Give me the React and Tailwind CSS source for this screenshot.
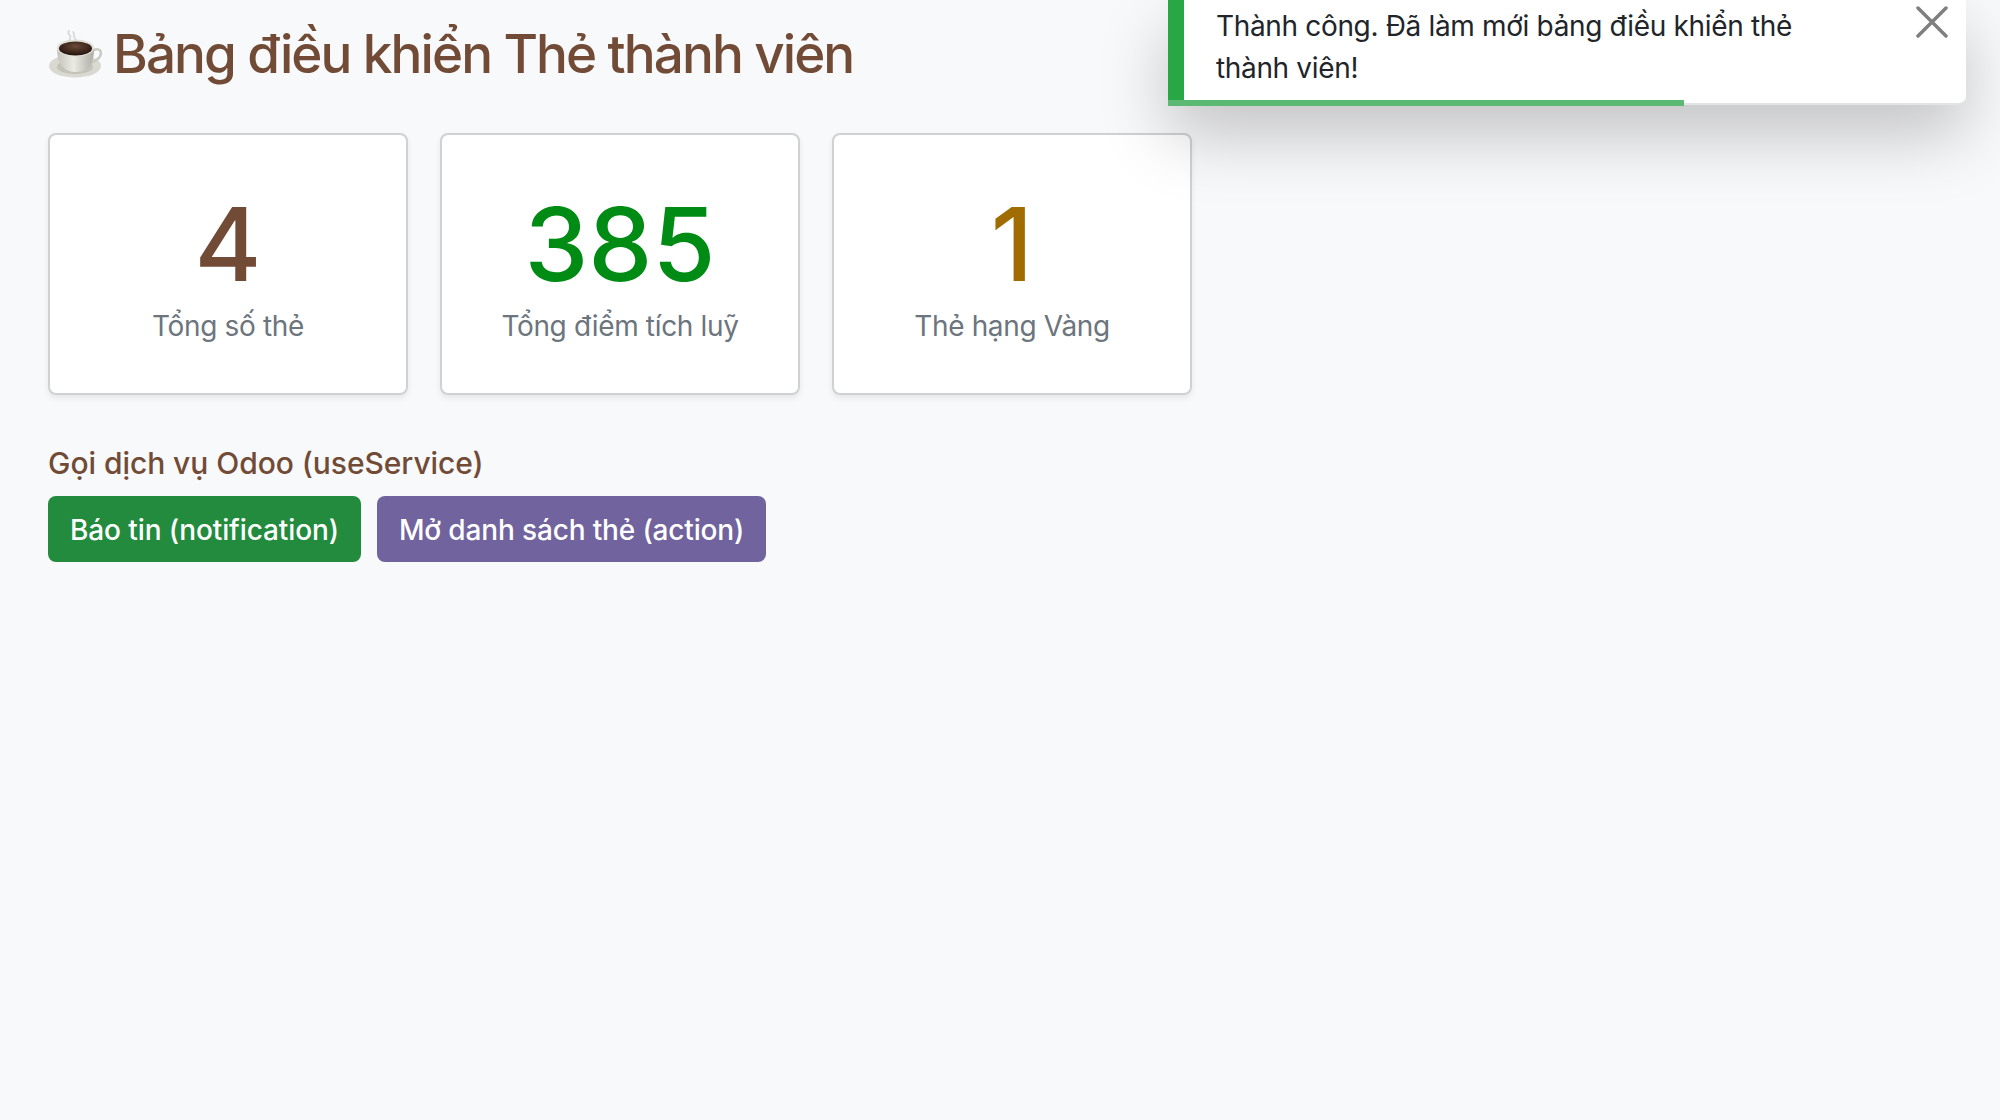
const cards = [
  { value: "4", label: "Tổng số thẻ", color: "text-[#714b35]" },
  { value: "385", label: "Tổng điểm tích luỹ", color: "text-[#008c14]" },
  { value: "1", label: "Thẻ hạng Vàng", color: "text-[#a06c00]" },
]

function CoffeeIcon() {
  return (
    <svg width="54" height="50" viewBox="0 0 54 50" className="shrink-0">
      <defs>
        <linearGradient id="cup" x1="0" x2="1" y1="0" y2="0">
          <stop offset="0" stopColor="#c4c3ba" />
          <stop offset="0.45" stopColor="#ebeae3" />
          <stop offset="1" stopColor="#aeada4" />
        </linearGradient>
        <radialGradient id="coffee" cx="0.5" cy="0.35" r="0.7">
          <stop offset="0" stopColor="#6a4a38" />
          <stop offset="1" stopColor="#1e0f09" />
        </radialGradient>
      </defs>
      <path d="M21 2c-3 3 3 4 1 7-1 2 1 3 1 5M25 3c3 2-1 4 2 6 2 2-1 3 0 5" fill="none" stroke="#dcdcdc" strokeWidth="2" strokeLinecap="round" />
      <ellipse cx="27" cy="37" rx="26" ry="11.5" fill="#d9d8d1" />
      <ellipse cx="27" cy="38" rx="18" ry="7" fill="#c4c3ba" />
      <path d="M44 22c4-3 9-2 9 2 0 5-7 9-13 11" fill="none" stroke="#cbcac2" strokeWidth="2.5" />
      <path d="M9 19c0 14 5 24 19 24s18-10 18-24z" fill="url(#cup)" />
      <ellipse cx="27.500" cy="19" rx="18.500" ry="8.500" fill="#e0dfd8" />
      <ellipse cx="27.500" cy="19.500" rx="16.500" ry="7" fill="url(#coffee)" />
    </svg>
  )
}

export default function App() {
  return (
    <div className="min-h-screen bg-[#f8f9fb] px-12 pt-[18px] font-['Inter',sans-serif]">
      {/* toast */}
      <div className="absolute top-0 left-[1168px] w-[798px] h-[105px] rounded-br-lg bg-white border-l-16 border-b-2 border-b-[#e2e4e6] border-l-[#28a745] shadow-[0_30px_68px_rgba(0,0,0,0.22)]">
        <p className="pl-8 pr-24 pt-[5px] text-[28px] leading-[42px] tracking-[-0.34px] text-[#212529]">
          Thành công. Đã làm mới bảng điều khiển thẻ thành viên!
        </p>
        <svg width="32" height="32" viewBox="0 0 32 32" className="absolute top-[6px] right-[18px]">
          <path d="M2 2l28 28M30 2L2 30" stroke="#7f7f7f" strokeWidth="3.500" strokeLinecap="round" />
        </svg>
        <div className="absolute -left-4 -bottom-[3px] h-[6px] w-[516px] bg-[#5cb974]"></div>
      </div>

      {/* title */}
      <div className="flex items-center gap-[11px] h-[72px]">
        <CoffeeIcon />
        <h1 className="text-[53px] leading-[72px] font-medium tracking-[-1.9px] text-[#714b35] whitespace-nowrap">
          Bảng điều khiển Thẻ thành viên
        </h1>
      </div>

      {/* cards */}
      <div className="flex gap-8 mt-[43px]">
        {cards.map((c) => (
          <div
            key={c.label}
            className="w-[360px] h-[262px] flex flex-col items-center bg-white border-2 border-[#cfd1d3] rounded-lg shadow-[0_3px_6px_rgba(0,0,0,0.08)]"
          >
            <div className={`mt-[49px] text-[102px] leading-[120px] font-medium ${c.color}`}>
              {c.value}
            </div>
            <div className="mt-px text-[28px] leading-[42px] tracking-[-0.34px] text-[#6c757d]">{c.label}</div>
          </div>
        ))}
      </div>

      {/* services */}
      <h2 className="mt-[46px] text-[30px] leading-[44px] font-medium tracking-[-0.05px] text-[#714b35]">
        Gọi dịch vụ Odoo (useService)
      </h2>
      <div className="flex gap-4 mt-[11px]">
        <button className="h-[66px] px-[22px] pt-[2px] rounded-lg bg-[#228b3d] text-white text-[28px] font-medium tracking-[-0.1px]">
          Báo tin (notification)
        </button>
        <button className="h-[66px] px-[22px] pt-[2px] rounded-lg bg-[#71639e] text-white text-[28px] font-medium tracking-[-0.15px]">
          Mở danh sách thẻ (action)
        </button>
      </div>
    </div>
  )
}
